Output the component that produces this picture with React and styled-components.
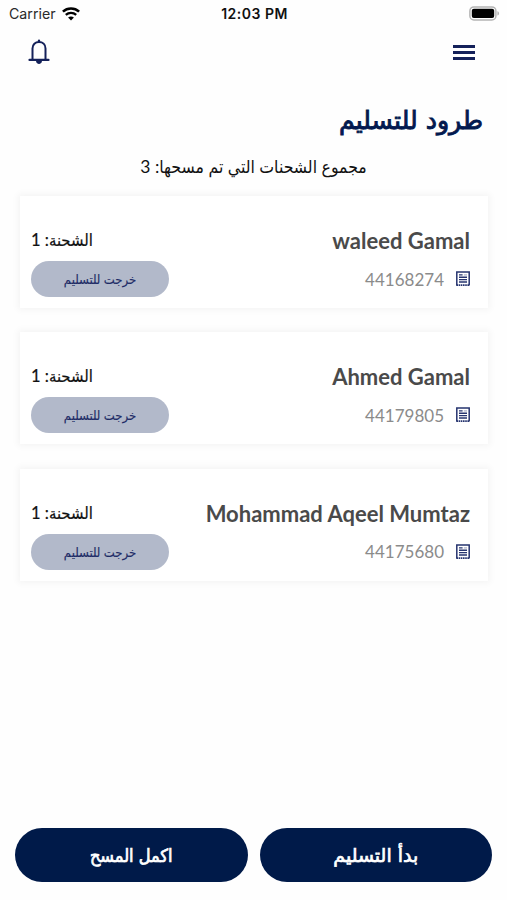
import React from "react";
import styled, { createGlobalStyle } from "styled-components";

const shipments = [
	{ name: "waleed Gamal", number: "44168274", count: 1 },
	{ name: "Ahmed Gamal", number: "44179805", count: 1 },
	{ name: "Mohammad Aqeel Mumtaz", number: "44175680", count: 1 },
];

const WifiIcon = () => (
	<svg width="18" height="14" viewBox="0 0 18 14" fill="none" stroke="#000">
		<path d="M0.9 4.6C5.5.4 12.5.4 17.1 4.6" strokeWidth="2.6" />
		<path d="M3.8 7.9C6.8 5.2 11.2 5.2 14.2 7.9" strokeWidth="2.3" />
		<path d="M9 13.4L6.1 10.5C7.8 9 10.2 9 11.9 10.5Z" fill="#000" stroke="none" />
	</svg>
);

const BatteryIcon = () => (
	<svg width="31" height="15" viewBox="0 0 31 15">
		<rect x="0.9" y="0.9" width="26" height="13" rx="4" fill="#fff" stroke="#b4b4b4" strokeWidth="1.5" />
		<rect x="2.8" y="2.8" width="22.4" height="9.2" rx="2" fill="#000" />
		<path d="M28.4 5.2C30.6 5.8 30.6 9 28.4 9.6Z" fill="#b4b4b4" />
	</svg>
);

const BellIcon = () => (
	<svg width="22" height="26" viewBox="0 0 22 26" fill="none" stroke="#14215a">
		<path d="M4.5 20.5V9.5C4.5 5.4 7.3 3 11 3S17.5 5.4 17.5 9.5V20.5" strokeWidth="2" />
		<path d="M1.5 20.9H20.5" strokeWidth="2.2" strokeLinecap="round" />
		<path d="M11 1.5V3" strokeWidth="2.2" strokeLinecap="round" />
		<path d="M8 21.8H14C14 26 8 26 8 21.8Z" fill="#14215a" stroke="none" />
	</svg>
);

const ReceiptIcon = () => (
	<svg width="14" height="16" viewBox="0 0 14 16" fill="none" stroke="#26346f">
		<path d="M0.8 14.6V1H13.2V14.6" strokeWidth="1.5" />
		<path d="M0.4 14.2H13.6" strokeWidth="1.7" strokeDasharray="1.6 0.6" />
		<path d="M3 3.9H6.6M3 6.2H11M3 8.6H11M3 11H11" strokeWidth="1.4" />
		<path d="M7.8 3.9H11" strokeWidth="1.2" opacity="0.4" />
	</svg>
);

const App = () => {
	return (
		<Screen>
			<GlobalStyle />
			<StatusBar>
				<Carrier>
					Carrier
					<WifiIcon />
				</Carrier>
				<Clock>12:03 PM</Clock>
				<Battery>
					<BatteryIcon />
				</Battery>
			</StatusBar>
			<Header>
				<IconButton aria-label="notifications">
					<BellIcon />
				</IconButton>
				<MenuButton aria-label="menu">
					<MenuLine />
					<MenuLine />
					<MenuLine />
				</MenuButton>
			</Header>
			<Title dir="rtl">طرود للتسليم</Title>
			<Total dir="rtl">مجموع الشحنات التي تم مسحها: 3</Total>
			<List dir="rtl">
				{shipments.map((item) => (
					<Card key={item.number}>
						<Customer>
							<Name dir="ltr">{item.name}</Name>
							<NumberRow>
								<ReceiptIcon />
								<ShipmentNumber>{item.number}</ShipmentNumber>
							</NumberRow>
						</Customer>
						<State>
							<Count>الشحنة: {item.count}</Count>
							<Badge>خرجت للتسليم</Badge>
						</State>
					</Card>
				))}
			</List>
			<Footer dir="rtl">
				<ActionButton $wide>بدأ التسليم</ActionButton>
				<ActionButton>اكمل المسح</ActionButton>
			</Footer>
		</Screen>
	);
};

const GlobalStyle = createGlobalStyle`
	* {
		box-sizing: border-box;
	}
	body {
		margin: 0;
		background-color: #fefefe;
	}
`;
const Screen = styled.div`
	width: 507px;
	height: 900px;
	display: flex;
	flex-direction: column;
	overflow: hidden;
	background-color: #fefefe;
	font-family: Lato, "DejaVu Sans Condensed", "DejaVu Sans", sans-serif;
`;
const StatusBar = styled.div`
	display: grid;
	grid-template-columns: 1fr auto 1fr;
	align-items: center;
	height: 27px;
	padding: 0 7px 0 9px;
	font-family: Inter, sans-serif;
	color: #111;
`;
const Carrier = styled.div`
	display: flex;
	align-items: center;
	gap: 6px;
	font-size: 14.2px;
	color: #2a2a2a;
`;
const Clock = styled.div`
	font-size: 14px;
	font-weight: 600;
	letter-spacing: 0.5px;
`;
const Battery = styled.div`
	display: flex;
	justify-content: flex-end;
`;
const Header = styled.div`
	display: flex;
	justify-content: space-between;
	align-items: center;
	height: 50px;
	padding: 0 32px 0 28px;
`;
const IconButton = styled.button`
	display: flex;
	padding: 0;
	border: none;
	background: none;
`;
const MenuButton = styled(IconButton)`
	flex-direction: column;
	gap: 3px;
	width: 22px;
`;
const MenuLine = styled.span`
	height: 3px;
	background-color: #14215a;
`;
const Title = styled.h1`
	height: 68px;
	margin: 0;
	padding: 26px 24px 0 0;
	font-family: "DejaVu Sans", sans-serif;
	font-size: 25.2px;
	line-height: 36px;
	font-weight: 400;
	color: #03194f;
	-webkit-text-stroke: 0.9px #03194f;
`;
const Total = styled.div`
	height: 51px;
	padding-top: 10px;
	text-align: center;
	font-size: 17.5px;
	line-height: 24px;
	color: #111;
`;
const List = styled.div`
	display: flex;
	flex-direction: column;
	gap: 24.4px;
	padding: 0 19px 0 20px;
`;
const Card = styled.div`
	display: flex;
	justify-content: space-between;
	height: 112px;
	padding: 30px 18px 0 11px;
	background-color: #fff;
	box-shadow: 0 0 7px 2px rgba(0, 0, 0, 0.045);
`;
const Customer = styled.div`
	display: flex;
	flex-direction: column;
	gap: 10px;
`;
const Name = styled.div`
	padding-top: 1px;
	font-size: 22px;
	line-height: 27px;
	font-weight: 700;
	color: #4a4a4a;
`;
const NumberRow = styled.div`
	display: flex;
	align-items: center;
	gap: 12px;
	height: 30px;
`;
const ShipmentNumber = styled.span`
	font-size: 17px;
	color: #8b8b8b;
`;
const State = styled.div`
	display: flex;
	flex-direction: column;
	align-items: flex-end;
	gap: 7px;
`;
const Count = styled.div`
	font-size: 16.5px;
	line-height: 28px;
	color: #111;
	-webkit-text-stroke: 0.2px #111;
`;
const Badge = styled.div`
	display: flex;
	justify-content: center;
	align-items: center;
	width: 138px;
	height: 36px;
	border-radius: 18px;
	background-color: #b2b9ca;
	font-size: 13px;
	color: #1d2b66;
	-webkit-text-stroke: 0.15px #1d2b66;
`;
const Footer = styled.div`
	display: flex;
	gap: 12px;
	margin-top: auto;
	padding: 0 15px 18px;
`;
const ActionButton = styled.button`
	flex: 1;
	height: 54px;
	border: none;
	border-radius: 27px;
	background-color: #001a49;
	font-family: ${(props) => (props.$wide ? '"DejaVu Sans"' : '"DejaVu Sans Condensed"')}, sans-serif;
	font-size: ${(props) => (props.$wide ? "19px" : "18px")};
	font-weight: 400;
	color: #fff;
	-webkit-text-stroke: 0.7px #fff;
`;
export default App;
